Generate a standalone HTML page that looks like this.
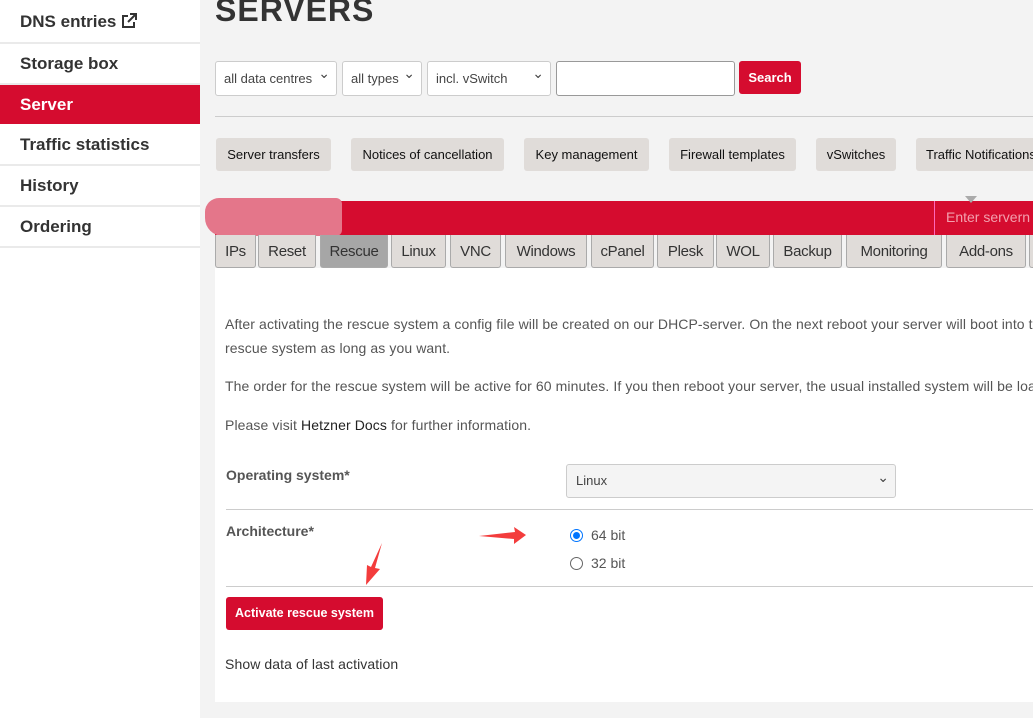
<!DOCTYPE html>
<html><head><meta charset="utf-8"><style>
*{box-sizing:border-box;margin:0;padding:0}
body{width:1033px;height:718px;overflow:hidden;background:#f3f3f3;font-family:"Liberation Sans",sans-serif;position:relative;color:#333}
.a{position:absolute}
#side{left:0;top:0;width:200px;height:718px;background:#fff}
.si{position:absolute;left:0;width:200px;font-size:17px;font-weight:bold;color:#333;padding-left:20px;border-bottom:2px solid #eaeaea}
.btn{position:absolute;top:138px;height:33px;background:#e0dcd9;border-radius:3px;font-size:13px;color:#111;line-height:33px;text-align:center;white-space:nowrap;overflow:hidden}
.sel{position:absolute;top:61px;height:35px;background:#fff;border:1px solid #ccc;border-radius:3px;font-size:13px;color:#444;line-height:33px;padding-left:8px}
.sel:after{content:"⌄";position:absolute;right:6px;top:-5px;font-size:14px;color:#444}
.tab{position:absolute;top:235px;height:33px;background:#e0dcd9;border:1px solid #aaa;border-top:none;border-radius:0 0 3px 3px;font-size:15px;color:#333;text-align:center;line-height:34px;letter-spacing:-.3px}
.p{position:absolute;left:225px;font-size:14px;color:#555;white-space:nowrap;letter-spacing:.1px}
</style></head><body>
<div id="side" class="a">
<div class="si" style="top:0;height:44px;line-height:44px">DNS entries <svg width="16" height="16" viewBox="0 0 16 16" style="vertical-align:-2px"><path d="M7 3H2v11h11V9" fill="none" stroke="#333" stroke-width="2"/><path d="M9 1h6v6M15 1L7 9" fill="none" stroke="#333" stroke-width="2"/></svg></div>
<div class="si" style="top:44px;height:41px;line-height:40px">Storage box</div>
<div class="si" style="top:85px;height:39px;line-height:39px;background:#d50c2f;color:#fff;border:none">Server</div>
<div class="si" style="top:124px;height:42px;line-height:41px">Traffic statistics</div>
<div class="si" style="top:166px;height:41px;line-height:40px">History</div>
<div class="si" style="top:207px;height:41px;line-height:40px">Ordering</div>
</div>
<div class="a" style="left:215px;top:-8px;font-size:32px;font-weight:bold;color:#333;letter-spacing:1px">SERVERS</div>
<div class="sel" style="left:215px;width:122px">all data centres</div>
<div class="sel" style="left:342px;width:80px">all types</div>
<div class="sel" style="left:427px;width:124px">incl. vSwitch</div>
<div class="a" style="left:556px;top:61px;width:179px;height:35px;background:#fff;border:1px solid #999;border-radius:3px"></div>
<div class="a" style="left:739px;top:61px;width:62px;height:33px;background:#d50c2f;border-radius:3px;color:#fff;font-size:13px;font-weight:bold;text-align:center;line-height:33px">Search</div>
<div class="a" style="left:215px;top:116px;width:818px;height:1px;background:#ccc"></div>
<div class="btn" style="left:216px;width:115px">Server transfers</div>
<div class="btn" style="left:351px;width:153px">Notices of cancellation</div>
<div class="btn" style="left:524px;width:125px">Key management</div>
<div class="btn" style="left:669px;width:127px">Firewall templates</div>
<div class="btn" style="left:816px;width:80px">vSwitches</div>
<div class="btn" style="left:916px;width:130px;text-align:left;padding-left:10px">Traffic Notifications</div>
<div class="a" style="left:215px;top:201px;width:818px;height:34px;background:#d50c2f"></div>
<div class="a" style="left:205px;top:198px;width:137px;height:38px;background:#e4768a;border-radius:14px 6px 6px 18px"></div>
<div class="a" style="left:934px;top:201px;width:1px;height:34px;background:#f6b"></div>
<div class="a" style="left:946px;top:209px;font-size:14px;color:#f3a0ae;white-space:nowrap">Enter servern</div>
<div class="a" style="left:965px;top:196px;width:0;height:0;border-left:6px solid transparent;border-right:6px solid transparent;border-top:7px solid #aaa"></div>
<div class="tab" style="left:215px;width:41px">IPs</div>
<div class="tab" style="left:258px;width:58px">Reset</div>
<div class="tab" style="left:320px;width:68px;background:#a6a6a6">Rescue</div>
<div class="tab" style="left:391px;width:55px">Linux</div>
<div class="tab" style="left:450px;width:51px">VNC</div>
<div class="tab" style="left:505px;width:82px">Windows</div>
<div class="tab" style="left:591px;width:63px">cPanel</div>
<div class="tab" style="left:657px;width:57px">Plesk</div>
<div class="tab" style="left:716px;width:54px">WOL</div>
<div class="tab" style="left:773px;width:69px">Backup</div>
<div class="tab" style="left:846px;width:96px">Monitoring</div>
<div class="tab" style="left:946px;width:80px">Add-ons</div>
<div class="tab" style="left:1029px;width:20px"></div>
<div class="a" style="left:215px;top:268px;width:818px;height:434px;background:#fff"></div>
<div class="p" style="top:316px">After activating the rescue system a config file will be created on our DHCP-server. On the next reboot your server will boot into the</div>
<div class="p" style="top:340px">rescue system as long as you want.</div>
<div class="p" style="top:378px">The order for the rescue system will be active for 60 minutes. If you then reboot your server, the usual installed system will be loaded.</div>
<div class="p" style="top:417px">Please visit <span style="color:#222">Hetzner Docs</span> for further information.</div>
<div class="a" style="left:226px;top:467px;font-size:14px;font-weight:bold;color:#555">Operating system*</div>
<div class="a" style="left:566px;top:464px;width:330px;height:34px;background:#f4f4f4;border:1px solid #ccc;border-radius:3px;font-size:13px;color:#444;line-height:32px;padding-left:9px">Linux<span style="position:absolute;right:6px;top:-4px;font-size:14px">⌄</span></div>
<div class="a" style="left:226px;top:509px;width:807px;height:1px;background:#ccc"></div>
<div class="a" style="left:226px;top:523px;font-size:14px;font-weight:bold;color:#555">Architecture*</div>
<div class="a" style="left:570px;top:529px;width:13px;height:13px;border:1px solid #0075ff;border-radius:50%"><div style="margin:2px;width:7px;height:7px;border-radius:50%;background:#0075ff"></div></div>
<div class="a" style="left:591px;top:527px;font-size:14px;color:#555">64 bit</div>
<div class="a" style="left:570px;top:557px;width:13px;height:13px;border:1px solid #666;border-radius:50%"></div>
<div class="a" style="left:591px;top:555px;font-size:14px;color:#555">32 bit</div>
<svg class="a" style="left:470px;top:520px" width="70" height="30"><path d="M9 16 L45 12 L44 7 L56 15 L44 24 L44 19 Z" fill="#f33c3c"/></svg>
<svg class="a" style="left:355px;top:538px" width="35" height="50"><path d="M27 5 L20 30 L25 31 L11 47 L12 27 L16 29 Z" fill="#f33c3c"/></svg>
<div class="a" style="left:226px;top:586px;width:807px;height:1px;background:#ccc"></div>
<div class="a" style="left:226px;top:597px;width:157px;height:33px;background:#d50c2f;border-radius:3px;color:#fff;font-size:12.5px;font-weight:bold;text-align:center;line-height:33px">Activate rescue system</div>
<div class="a" style="left:225px;top:656px;font-size:14px;color:#333;letter-spacing:.1px">Show data of last activation</div>
</body></html>
